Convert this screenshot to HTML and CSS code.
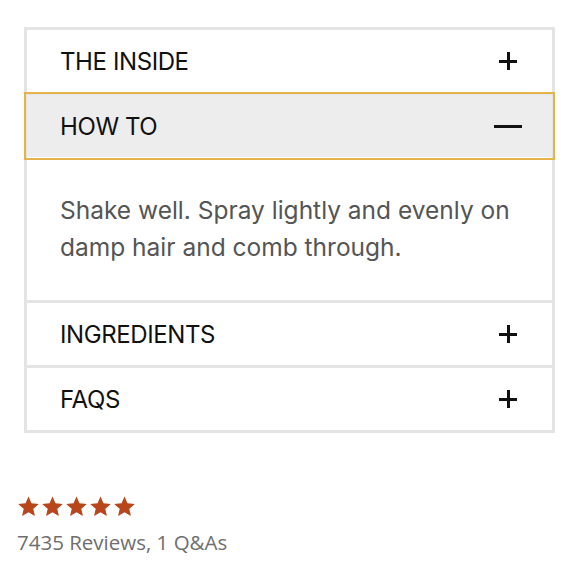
FILE: index.html
```html
<!DOCTYPE html>
<html>
<head>
<meta charset="utf-8">
<link rel="stylesheet" href="styles.css">
</head>
<body>
<div class="page">
  <div class="accordion">
    <div class="item">
      <div class="head"><span class="title">THE INSIDE</span><span class="icon plus"></span></div>
    </div>
    <div class="item">
      <div class="head open"><span class="title">HOW TO</span><span class="icon minus"></span></div>
      <div class="body">Shake well. Spray lightly and evenly on damp hair and comb through.</div>
    </div>
    <div class="item">
      <div class="head"><span class="title">INGREDIENTS</span><span class="icon plus"></span></div>
    </div>
    <div class="item">
      <div class="head"><span class="title">FAQS</span><span class="icon plus"></span></div>
    </div>
  </div>
  <div class="reviews">
    <div class="stars">
      <svg viewBox="0 0 24 24" class="star"><path d="M12 1.5l3.1 7.1 7.7.7-5.8 5.1 1.7 7.6L12 18l-6.7 4 1.7-7.6L1.2 9.3l7.7-.7z"/></svg>
      <svg viewBox="0 0 24 24" class="star"><path d="M12 1.5l3.1 7.1 7.7.7-5.8 5.1 1.7 7.6L12 18l-6.7 4 1.7-7.6L1.2 9.3l7.7-.7z"/></svg>
      <svg viewBox="0 0 24 24" class="star"><path d="M12 1.5l3.1 7.1 7.7.7-5.8 5.1 1.7 7.6L12 18l-6.7 4 1.7-7.6L1.2 9.3l7.7-.7z"/></svg>
      <svg viewBox="0 0 24 24" class="star"><path d="M12 1.5l3.1 7.1 7.7.7-5.8 5.1 1.7 7.6L12 18l-6.7 4 1.7-7.6L1.2 9.3l7.7-.7z"/></svg>
      <svg viewBox="0 0 24 24" class="star"><path d="M12 1.5l3.1 7.1 7.7.7-5.8 5.1 1.7 7.6L12 18l-6.7 4 1.7-7.6L1.2 9.3l7.7-.7z"/></svg>
    </div>
    <div class="count">7435 Reviews, 1 Q&amp;As</div>
  </div>
</div>
</body>
</html>
```
FILE: styles.css
```css
html, body {
  margin: 0;
  padding: 0;
  background: #ffffff;
}
.page {
  padding: 27px 0 0 0;
}
.accordion {
  margin: 0 25px 0 24px;
  border: 3px solid #e4e4e4;
}
.item + .item {
  border-top: 3px solid #e4e4e4;
}
.head {
  height: 62px;
  display: flex;
  align-items: center;
  justify-content: space-between;
  padding: 0 34px 0 33px;
  font-family: "Inter", "Liberation Sans", sans-serif;
  font-size: 24px;
  font-weight: 400;
  color: #111111;
  letter-spacing: -0.4px;
}
.head.open {
  background: #ededed;
  outline: 2px solid #e6b34a;
  outline-offset: 1px;
}
.icon {
  position: relative;
  display: block;
  width: 20px;
  height: 20px;
}
.icon::before {
  content: "";
  position: absolute;
  left: 1px;
  right: 1px;
  top: 9px;
  height: 2.5px;
  background: #111111;
}
.plus::after {
  content: "";
  position: absolute;
  top: 1px;
  bottom: 1px;
  left: 9px;
  width: 2.5px;
  background: #111111;
}
.minus {
  width: 30px;
  margin-right: -5px;
}
.body {
  height: 143px;
  box-sizing: border-box;
  padding: 35px 8px 0 33px;
  font-family: "Inter", "Liberation Sans", sans-serif;
  font-size: 24.5px;
  line-height: 37px;
  color: #555555;
  letter-spacing: 0;
}
.reviews {
  padding: 62px 0 0 17px;
}
.stars {
  display: flex;
  gap: 1px;
  height: 23px;
}
.star {
  width: 23px;
  height: 23px;
  fill: #b8461b;
}
.count {
  margin-top: 10px;
  font-family: "Open Sans", "Liberation Sans", sans-serif;
  font-size: 20.5px;
  color: #6e6e6e;
}
```
